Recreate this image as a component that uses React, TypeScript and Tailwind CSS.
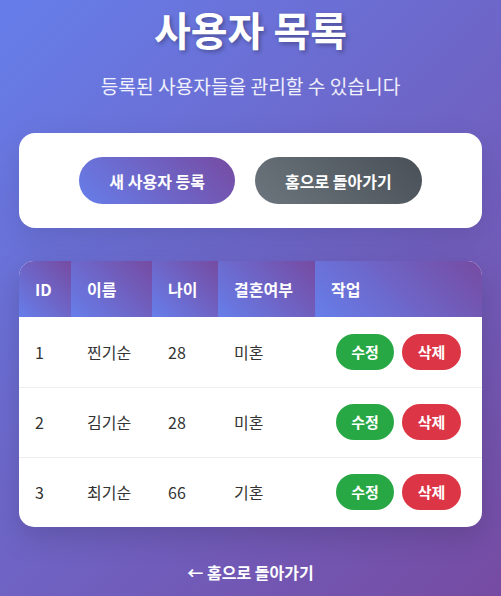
import React from "react";

const users = [
  { id: 1, name: "찐기순", age: 28, married: "미혼" },
  { id: 2, name: "김기순", age: 28, married: "미혼" },
  { id: 3, name: "최기순", age: 66, married: "기혼" },
];

const thCls =
  "bg-[linear-gradient(45deg,#667eea,#764ba2)] text-white font-bold text-[16px] text-left px-4 h-[56px] leading-[24px]";

export default function App() {
  return (
    <div
      className="min-h-screen w-full bg-[linear-gradient(135deg,#667eea_0%,#764ba2_100%)] px-[19px] pb-[15px]"
      style={{ fontFamily: '"Noto Sans CJK KR", "Noto Sans", sans-serif' }}
    >
      <h1 className="text-center text-white font-bold text-[40px] leading-[58px] mb-[14px] [text-shadow:2px_2px_4px_rgba(0,0,0,0.3)]">
        사용자 목록
      </h1>
      <p className="text-center text-white/90 text-[19.2px] leading-[28px] mb-[33px]">
        등록된 사용자들을 관리할 수 있습니다
      </p>

      <div className="bg-white rounded-[16px] shadow-[0_10px_30px_rgba(0,0,0,0.1)] py-[24px] flex justify-center gap-[20px]">
        <button className="h-[47px] px-[30px] rounded-full text-white font-bold text-[16px] bg-[linear-gradient(45deg,#667eea,#764ba2)]">
          새 사용자 등록
        </button>
        <button className="h-[47px] px-[30px] rounded-full text-white font-bold text-[16px] bg-[linear-gradient(45deg,#6c757d,#495057)]">
          홈으로 돌아가기
        </button>
      </div>

      <div className="mt-[33px] bg-white rounded-[15px] overflow-hidden shadow-[0_10px_30px_rgba(0,0,0,0.15)]">
        <table className="w-full table-fixed border-collapse">
          <thead>
            <tr>
              <th className={thCls + " w-[52px]"}>ID</th>
              <th className={thCls + " w-[81px]"}>이름</th>
              <th className={thCls + " w-[66px]"}>나이</th>
              <th className={thCls + " w-[97px]"}>결혼여부</th>
              <th className={thCls}>작업</th>
            </tr>
          </thead>
          <tbody>
            {users.map((u, i) => (
              <tr
                key={u.id}
                className={
                  "h-[70px] text-[16px] text-[#333] " +
                  (i < users.length - 1 ? "border-b border-[#eeeeee]" : "")
                }
              >
                <td className="px-4">{u.id}</td>
                <td className="px-4">{u.name}</td>
                <td className="px-4">{u.age}</td>
                <td className="px-4">{u.married}</td>
                <td className="px-4">
                  <div className="flex justify-center gap-[8px]">
                    <button className="h-[36px] w-[58px] rounded-full bg-[#28a745] text-white font-bold text-[15px]">
                      수정
                    </button>
                    <button className="h-[36px] w-[59px] rounded-full bg-[#dc3545] text-white font-bold text-[15px]">
                      삭제
                    </button>
                  </div>
                </td>
              </tr>
            ))}
          </tbody>
        </table>
      </div>

      <div className="mt-[33px] text-center">
        <a className="text-white font-bold text-[16px] leading-[23px]">← 홈으로 돌아가기</a>
      </div>
    </div>
  );
}
